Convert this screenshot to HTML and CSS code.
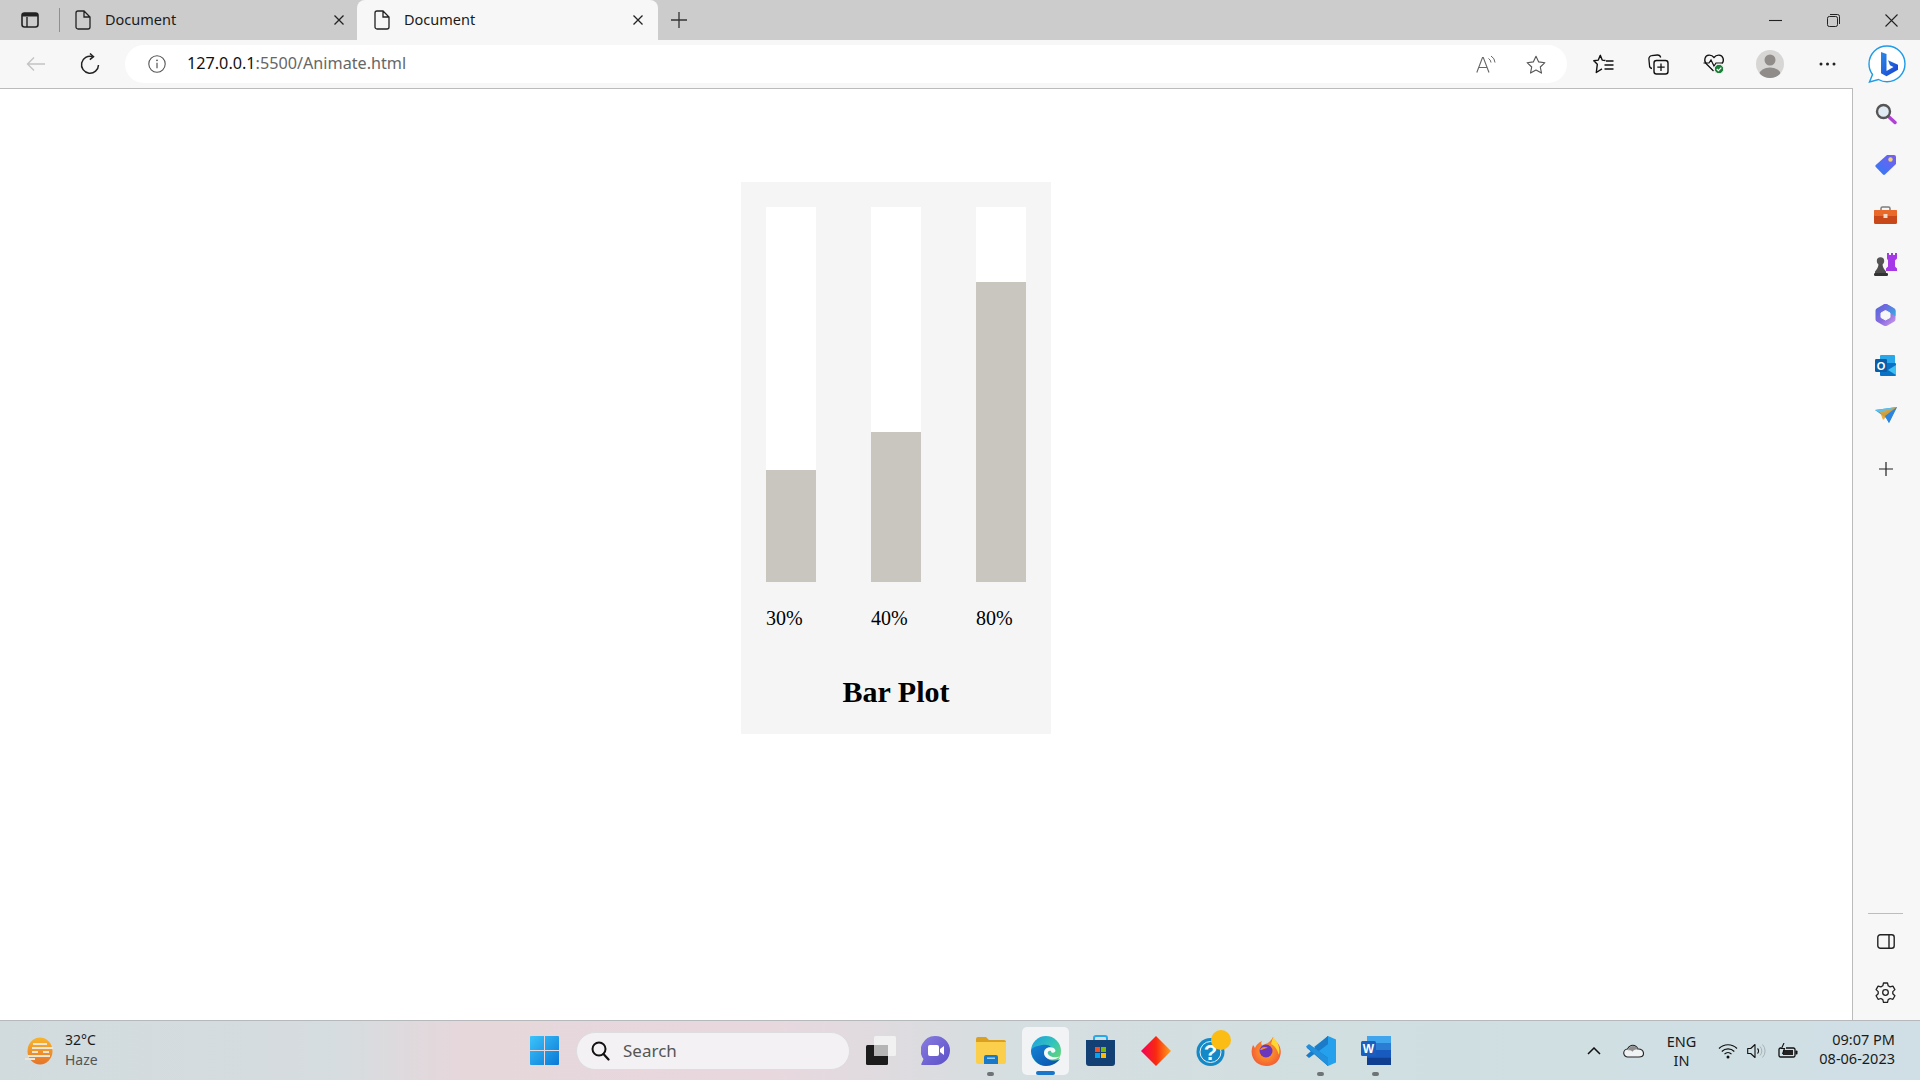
FILE: index.html
```html
<!DOCTYPE html>
<html lang="en">
<head>
    <meta charset="UTF-8">
    <meta name="viewport" content="width=device-width, initial-scale=1.0">
    <title>Document</title>
    <link rel="stylesheet" href="styles.css">
</head>
<body>
    <div class="tabstrip">
        <svg class="tabs-btn" width="18" height="16" viewBox="0 0 18 16"><rect x="1" y="1" width="16" height="14" rx="2.500" fill="none" stroke="#222" stroke-width="1.600"/><path d="M1 4.500V3a2 2 0 0 1 2-2h12a2 2 0 0 1 2 2v1.500z" fill="#222"/><path d="M6 5v10" stroke="#222" stroke-width="1.400"/></svg>
        <span class="tab-sep"></span>
        <div class="tab">
            <svg width="16" height="20" viewBox="0 0 16 20"><path d="M3 1h6l6 6v10a2 2 0 0 1-2 2H3a2 2 0 0 1-2-2V3a2 2 0 0 1 2-2zM9 1v6h6" fill="none" stroke="#222" stroke-width="1.300"/></svg>
            <span class="tab-title">Document</span>
            <svg class="tab-close" width="12" height="12" viewBox="0 0 12 12"><path d="M1.500 1.500l9 9M10.500 1.500l-9 9" stroke="#222" stroke-width="1.300"/></svg>
        </div>
        <div class="tab tab-active">
            <svg width="16" height="20" viewBox="0 0 16 20"><path d="M3 1h6l6 6v10a2 2 0 0 1-2 2H3a2 2 0 0 1-2-2V3a2 2 0 0 1 2-2zM9 1v6h6" fill="none" stroke="#222" stroke-width="1.300"/></svg>
            <span class="tab-title">Document</span>
            <svg class="tab-close" width="12" height="12" viewBox="0 0 12 12"><path d="M1.500 1.500l9 9M10.500 1.500l-9 9" stroke="#222" stroke-width="1.300"/></svg>
        </div>
        <svg class="tab-new" width="18" height="18" viewBox="0 0 18 18"><path d="M9 1v16M1 9h16" stroke="#333" stroke-width="1.300"/></svg>
        <div class="win-controls">
            <svg width="13" height="13" viewBox="0 0 13 13"><path d="M0 6.500h13" stroke="#222" stroke-width="1.100"/></svg>
            <svg width="13" height="13" viewBox="0 0 13 13"><rect x=".5" y="2.500" width="10" height="10" rx="1.800" fill="none" stroke="#222"/><path d="M3 .5h7.500a2 2 0 0 1 2 2V10" fill="none" stroke="#222"/></svg>
            <svg width="13" height="13" viewBox="0 0 13 13"><path d="M.5.5l12 12M12.500.5l-12 12" stroke="#222" stroke-width="1.100"/></svg>
        </div>
    </div>

    <div class="toolbar">
        <div class="tool-slot back-slot">
            <svg width="20" height="16" viewBox="0 0 20 16"><path d="M19 8H1.500M8 1.500L1.500 8 8 14.500" fill="none" stroke="#c4c4c4" stroke-width="1.400"/></svg>
        </div>
        <div class="tool-slot reload-slot">
            <svg width="20" height="22" viewBox="0 0 20 22"><path d="M12.500 3.600A8.500 8.500 0 1 0 18.500 12" fill="none" stroke="#222" stroke-width="1.500"/><path d="M10 .5l3.500 3.200-3.700 3" fill="none" stroke="#222" stroke-width="1.500"/></svg>
        </div>
        <div class="urlbar">
            <svg width="18" height="18" viewBox="0 0 18 18"><circle cx="9" cy="9" r="8.200" fill="none" stroke="#555" stroke-width="1.100"/><path d="M9 7.800v5.500" stroke="#555" stroke-width="1.200"/><circle cx="9" cy="5.300" r=".9" fill="#555"/></svg>
            <span class="url"><span class="url-host">127.0.0.1</span>:5500/Animate.html</span>
            <svg class="read-icon" width="20" height="18" viewBox="0 0 20 18"><path d="M.8 17.500L6.500 2.500h.8l5.700 15M3 12.500h8" fill="none" stroke="#666" stroke-width="1.100"/><path d="M12.500 3.500a5 5 0 0 1 2.500 4M15 1a8 8 0 0 1 4 6.500" fill="none" stroke="#666" stroke-width="1"/></svg>
            <svg class="star-icon" width="20" height="19" viewBox="0 0 20 19"><path d="M10 1.200l2.700 5.700 6.200.8-4.600 4.300 1.200 6.100-5.500-3-5.500 3 1.200-6.100-4.600-4.300 6.200-.8z" fill="none" stroke="#555" stroke-width="1.100" stroke-linejoin="round"/></svg>
        </div>
        <div class="tool-group">
            <div class="tool-slot">
                <svg width="21" height="20" viewBox="0 0 21 20"><path d="M12.500 6.500l-3.300-.4L7.300 1.300 5.300 6.100 .8 6.800l3.500 3.500-1 8.200 5.700-3.600" fill="none" stroke="#111" stroke-width="1.400" stroke-linejoin="round"/><path d="M13 7h7.500M11.500 11h9M11.500 15h9" stroke="#111" stroke-width="1.300"/></svg>
            </div>
            <div class="tool-slot">
                <svg width="21" height="21" viewBox="0 0 21 21"><path d="M4 14.500A3 3 0 0 1 1.500 11.500l-.6-6.500a3 3 0 0 1 2.700-3.300l5.700-.7c1.700-.1 3 .8 3.400 2.500" fill="none" stroke="#111" stroke-width="1.300"/><rect x="6" y="6.500" width="14" height="13.500" rx="2.500" fill="none" stroke="#111" stroke-width="1.400"/><path d="M13 9.500v7.500M9.300 13.200h7.400" stroke="#111" stroke-width="1.300"/></svg>
            </div>
            <div class="tool-slot">
                <svg width="22" height="20" viewBox="0 0 22 20"><path d="M10.500 17L3.500 10C.5 7 1.500 1.500 6 1.200c2.200-.1 3.800.7 5 2.300 1.200-1.600 2.800-2.400 5-2.300 4.500.3 5.500 5.800 3 8.300" fill="none" stroke="#111" stroke-width="1.300"/><path d="M.5 9H6l2-3 3 6 2-3h6" fill="none" stroke="#111" stroke-width="1.200"/><circle cx="16" cy="15" r="4.700" fill="#1a7f37" stroke="#f7f7f7"/><path d="M13.800 15l1.600 1.600 2.900-2.900" fill="none" stroke="#fff" stroke-width="1.200"/></svg>
            </div>
            <div class="tool-slot profile-slot">
                <svg width="28" height="28" viewBox="0 0 28 28"><defs><clipPath id="profileClip"><circle cx="14" cy="14" r="14"/></clipPath></defs><circle cx="14" cy="14" r="14" fill="#d8d6d4"/><g clip-path="url(#profileClip)" fill="#8f8c8a"><circle cx="14" cy="10" r="5.500"/><ellipse cx="14" cy="24" rx="10.500" ry="6.500"/></g></svg>
            </div>
            <div class="tool-slot dots-slot">
                <svg width="17" height="4" viewBox="0 0 17 4" fill="#222"><circle cx="2" cy="2" r="1.500"/><circle cx="8.500" cy="2" r="1.500"/><circle cx="15" cy="2" r="1.500"/></svg>
            </div>
            <div class="tool-slot bing-slot">
                <svg width="38" height="38" viewBox="0 0 38 38"><defs><linearGradient id="bingGrad" x1="0" y1="0" x2="1" y2="1"><stop offset="0" stop-color="#2a8ae8"/><stop offset="1" stop-color="#1a3fd0"/></linearGradient></defs><path d="M19 1C9 1 1 9 1 19c0 4 1.300 7.500 3.500 10.500L1.500 37l9-2.500c2.600 1.500 5.500 2.300 8.500 2.300 10 0 18-8 18-18S29 1 19 1z" fill="#fff" stroke="#1f9be8" stroke-width="1.400"/><path d="M13 7l5.500 2v17l7-4-3.500-1.700-2-5 10 4.500v5l-11.500 6.500-5.500-3z" fill="url(#bingGrad)"/></svg>
            </div>
        </div>
    </div>

    <div class="main">
        <div class="page">
            <div class="panel">
                <div class="bars">
                    <div class="bar-col">
                        <div class="track"><div class="fill" style="height: 30%"></div></div>
                        <p class="bar-label">30%</p>
                    </div>
                    <div class="bar-col">
                        <div class="track"><div class="fill" style="height: 40%"></div></div>
                        <p class="bar-label">40%</p>
                    </div>
                    <div class="bar-col">
                        <div class="track"><div class="fill" style="height: 80%"></div></div>
                        <p class="bar-label">80%</p>
                    </div>
                </div>
                <h2 class="plot-title">Bar Plot</h2>
            </div>
        </div>

        <div class="sidebar">
            <div class="side-slot">
                <svg width="22" height="22" viewBox="0 0 22 22"><path d="M13 13l7 6.500" stroke="#b23fd6" stroke-width="3.400" stroke-linecap="round"/><circle cx="8.500" cy="8.500" r="6.500" fill="#dfeaf2" stroke="#555" stroke-width="2.400"/></svg>
            </div>
            <div class="side-slot">
                <svg width="21" height="21" viewBox="0 0 21 21"><defs><linearGradient id="tagGrad" x1="0" y1="1" x2="1" y2="0"><stop offset="0" stop-color="#2f7cf6"/><stop offset="1" stop-color="#7a5cf0"/></linearGradient></defs><path d="M12 1h7a2 2 0 0 1 2 2v7L10 20.500a1.500 1.500 0 0 1-2 0L.8 13a1.500 1.500 0 0 1 0-2z" fill="url(#tagGrad)"/><circle cx="15.500" cy="5.500" r="2.200" fill="#f1d36a"/></svg>
            </div>
            <div class="side-slot">
                <svg class="side-toolbox" width="23" height="18" viewBox="0 0 23 18"><path d="M7 5V2.500A1.500 1.500 0 0 1 8.500 1h6A1.500 1.500 0 0 1 16 2.500V5" fill="none" stroke="#7d7d7d" stroke-width="1.500"/><rect y="4" width="23" height="14" rx="1.500" fill="#c9481a"/><rect y="4" width="23" height="6" rx="1" fill="#e8692a"/><rect x="9.500" y="8" width="4" height="4" fill="#f1d9c8"/></svg>
            </div>
            <div class="side-slot">
                <svg width="23" height="23" viewBox="0 0 23 23"><path d="M13 0h2v2h2V0h2v2h2V0h2v5.500l-2 2v6l2 2V18H12v-2.500l2-2v-6l-1-2z" fill="#a638e8"/><circle cx="6.500" cy="8" r="3.700" fill="#555"/><path d="M4.500 11h4c0 3 1.500 5 3.500 7.500V20H1v-1.500C3 16 4.500 14 4.500 11z" fill="#4d4d4d"/><rect y="20" width="14" height="3" rx="1.200" fill="#333"/></svg>
            </div>
            <div class="side-slot">
                <svg width="21" height="22" viewBox="0 0 21 22"><defs><linearGradient id="msGrad" x1="0" y1="0" x2="1" y2="1"><stop offset="0" stop-color="#4a68dc"/><stop offset=".55" stop-color="#8c6be0"/><stop offset="1" stop-color="#cfa0ea"/></linearGradient><linearGradient id="msTeal" x1="0" y1="0" x2="1" y2="1"><stop offset="0" stop-color="#7a5ce0"/><stop offset="1" stop-color="#2fb0e0"/></linearGradient></defs><path d="M8.500 .5a4 4 0 0 1 4 0l6.500 3.800a3 3 0 0 1 1.500 2.700v8a3 3 0 0 1-1.500 2.700l-6.500 3.800a4 4 0 0 1-4 0L2 17.700A3 3 0 0 1 .5 15V7A3 3 0 0 1 2 4.300z" fill="url(#msGrad)"/><path d="M8.500 .5a4 4 0 0 1 4 0l6.500 3.800a3 3 0 0 1 1.500 2.700v5l-6-3.500-3-3z" fill="url(#msTeal)"/><path d="M10.500 6.500l4.500 2.500v4.500L10.500 16 6 13.500V9z" fill="#f7f7f7" stroke="#f7f7f7" stroke-linejoin="round"/></svg>
            </div>
            <div class="side-slot">
                <svg width="21" height="21" viewBox="0 0 21 21"><rect x="5" y="0" width="15" height="10" rx="1" fill="#28a8ea"/><rect x="5" y="8" width="16" height="13" rx="1" fill="#0a72c6"/><path d="M21 10v10l-8-5z" fill="#3dc0f2"/><rect y="4" width="12" height="13" rx="1.200" fill="#0a5ea8"/><text x="6" y="14.500" class="outlook-o">O</text></svg>
            </div>
            <div class="side-slot">
                <svg width="22" height="16" viewBox="0 0 22 16"><path d="M0 3l22-3-8 16-3-5z" fill="#2f9ae8"/><path d="M0 3l22-3L8 7z" fill="#5bc0f0"/><path d="M5 5l17-5L8 13z" fill="#e8a021" opacity=".85"/><path d="M14 16L22 0 10 9z" fill="#2a84e0"/></svg>
            </div>
            <div class="side-slot side-plus">
                <svg width="16" height="16" viewBox="0 0 16 16"><path d="M8 1v14M1 8h14" stroke="#222" stroke-width="1.200"/></svg>
            </div>
            <div class="side-bottom">
                <span class="side-divider"></span>
                <svg class="side-panel" width="18" height="15" viewBox="0 0 18 15"><rect x=".8" y=".8" width="16.400" height="13.400" rx="2.500" fill="none" stroke="#222" stroke-width="1.400"/><path d="M12 1v13" stroke="#222" stroke-width="1.400"/></svg>
                <svg class="side-gear" width="21" height="21" viewBox="0 0 21 21"><path d="M8.500 1h4l.7 2.800 1.900 1.100 2.800-.8 2 3.500-2.100 2 0 2.200 2.100 2-2 3.500-2.800-.8-1.900 1.100-.7 2.800h-4l-.7-2.800-1.900-1.100-2.800.8-2-3.500 2.100-2 0-2.200-2.100-2 2-3.500 2.800.8 1.900-1.100z" fill="none" stroke="#222" stroke-width="1.300" stroke-linejoin="round"/><circle cx="10.500" cy="10.500" r="2.800" fill="none" stroke="#222" stroke-width="1.300"/></svg>
            </div>
        </div>
    </div>

    <div class="taskbar">
        <div class="weather">
            <svg width="30" height="28" viewBox="0 0 30 28"><defs><linearGradient id="sunGrad" x1="0" y1="0" x2="0" y2="1"><stop offset="0" stop-color="#f8b52c"/><stop offset="1" stop-color="#e5742a"/></linearGradient></defs><ellipse cx="15" cy="14" rx="12.500" ry="13.500" fill="url(#sunGrad)"/><path d="M8 7h14M7 11h21M18 15h6M7 15h6M3 19h22M0 22h10" stroke="#efe7d6" stroke-width="1.800"/></svg>
            <div class="weather-text">
                <span>32°C</span>
                <span class="weather-sub">Haze</span>
            </div>
        </div>
        <div class="start">
            <svg width="29" height="29" viewBox="0 0 29 29"><defs><linearGradient id="winGrad" x1="0" y1="0" x2="1" y2="1"><stop offset="0" stop-color="#3cc4fa"/><stop offset="1" stop-color="#0a78d6"/></linearGradient></defs><path d="M0 1a1 1 0 0 1 1-1h13v14H0zM15 0h13a1 1 0 0 1 1 1v13H15zM0 15h14v14H1a1 1 0 0 1-1-1zM15 15h14v13a1 1 0 0 1-1 1H15z" fill="url(#winGrad)"/></svg>
        </div>
        <div class="searchbox">
            <svg width="19" height="20" viewBox="0 0 19 20"><circle cx="8" cy="8" r="6.500" fill="none" stroke="#111" stroke-width="2"/><path d="M12.500 13l5 5.500" stroke="#111" stroke-width="2.200" stroke-linecap="round"/></svg>
            <span>Search</span>
        </div>
        <div class="apps">
            <div class="app">
                <svg width="30" height="29" viewBox="0 0 30 29"><rect y="9" width="22" height="20" rx="1.500" fill="#1c1c1c"/><rect x="8" y="0" width="22" height="20" rx="1.500" fill="#f4f4f4" fill-opacity=".85"/><rect x="8" y="9" width="14" height="11" fill="#b5b5b5"/></svg>
            </div>
            <div class="app">
                <svg width="29" height="29" viewBox="0 0 29 29"><defs><linearGradient id="chatGrad" x1="0" y1="0" x2="1" y2="1"><stop offset="0" stop-color="#8a7ce0"/><stop offset="1" stop-color="#5a4fc8"/></linearGradient></defs><path d="M14.500 0a14.500 14.500 0 0 1 0 29H1c-1 0-1-.8-.5-1.500L2.500 23A14.500 14.500 0 0 1 14.500 0z" fill="url(#chatGrad)"/><rect x="7" y="9" width="11" height="11" rx="2" fill="#fff"/><path d="M19 13l4-3v9l-4-3z" fill="#fff"/></svg>
            </div>
            <div class="app">
                <svg width="30" height="27" viewBox="0 0 30 27"><path d="M0 2a2 2 0 0 1 2-2h8l3 3h15a2 2 0 0 1 2 2v4H0z" fill="#d9a021"/><path d="M0 5h30v20a2 2 0 0 1-2 2H2a2 2 0 0 1-2-2z" fill="#fbcf4c"/><path d="M8 20a2 2 0 0 1 2-2h10a2 2 0 0 1 2 2v7H8z" fill="#1a78c8"/><rect x="11" y="20.500" width="8" height="1.500" fill="#8fd0f5"/></svg>
                <span class="app-dot"></span>
            </div>
            <div class="app app-active">
                <svg width="30" height="30" viewBox="0 0 30 30"><defs><linearGradient id="edgeGrad" x1="0" y1="0" x2="1" y2="1"><stop offset="0" stop-color="#1b9de2"/><stop offset=".5" stop-color="#33c6b8"/><stop offset="1" stop-color="#7ed957"/></linearGradient><linearGradient id="edgeBlue" x1="0" y1="0" x2="1" y2="1"><stop offset="0" stop-color="#1485d8"/><stop offset="1" stop-color="#0a4fa8"/></linearGradient></defs><circle cx="15" cy="15" r="15" fill="url(#edgeGrad)"/><path d="M0 15C1 24 8 30 15 30c6 0 11-3 14-7-4 2-9 2-12 0-3-2-4-5-3-8 1-3 4-4 7-3-2-3-6-4-10-3C5 10 0 12 0 15z" fill="url(#edgeBlue)"/><path d="M13 17c0-3.500 3-6.500 8-5.500 3 .6 5 3.500 2 5-2 .8-3-.2-3-1.500-2-1-4 1-3 3 1.500 3 6 4 12 2.500-4 3.500-9 3.500-12.500 2C14 21 13 19 13 17z" fill="#f5f7f8"/></svg>
                <span class="app-indicator"></span>
            </div>
            <div class="app">
                <svg width="29" height="31" viewBox="0 0 29 31"><path d="M8 5V3a2 2 0 0 1 2-2h9a2 2 0 0 1 2 2v2" fill="none" stroke="#28a8ea" stroke-width="2"/><path d="M0 5h29v23a3 3 0 0 1-3 3H3a3 3 0 0 1-3-3z" fill="#123f74"/><rect x="9" y="12" width="5" height="5" fill="#f25022"/><rect x="15" y="12" width="5" height="5" fill="#7fba00"/><rect x="9" y="18" width="5" height="5" fill="#00a4ef"/><rect x="15" y="18" width="5" height="5" fill="#ffb900"/></svg>
            </div>
            <div class="app">
                <svg width="30" height="30" viewBox="0 0 30 30"><defs><linearGradient id="diaGrad" x1="0" y1="0" x2="1" y2="0"><stop offset="0" stop-color="#f4005a"/><stop offset=".5" stop-color="#f92a10"/><stop offset="1" stop-color="#ffa21a"/></linearGradient></defs><path d="M15 0l15 15-15 15L0 15z" fill="url(#diaGrad)"/></svg>
            </div>
            <div class="app">
                <svg width="36" height="36" viewBox="0 0 36 36" class="help-icon"><circle cx="14.500" cy="22" r="14" fill="#1489c8"/><circle cx="14.500" cy="22" r="10.500" fill="none" stroke="#e6f2f5" stroke-width="1"/><text x="14.500" y="30" class="help-q">?</text><circle cx="25" cy="10" r="10" fill="#fbbd14"/></svg>
            </div>
            <div class="app">
                <svg width="30" height="30" viewBox="0 0 30 30"><defs><radialGradient id="foxGrad" cx=".5" cy=".5" r=".6"><stop offset="0" stop-color="#ffb020"/><stop offset="1" stop-color="#f2503a"/></radialGradient></defs><path d="M22 1c1 3 4 5 6 8 3 6 2 12-2 17-5 5-14 5-20 1C1 23-1 16 2 9c1 1 2 3 2 3 1-3 3-5 7-7-1 2-1 3 0 4 4-1 8-2 11-8z" fill="url(#foxGrad)"/><path d="M22 1c3 3 8 9 6 18-2-6-4-9-8-11z" fill="#fdd835"/><circle cx="15" cy="15" r="6.500" fill="#6b37bc"/><path d="M9 14c3 0 5-2 8-2-3-2-7-1-8 2z" fill="#f98a2a"/></svg>
            </div>
            <div class="app">
                <svg width="30" height="30" viewBox="0 0 30 30"><path d="M22 0l8 3.500v23L22 30 8 16z" fill="#24a0ed"/><path d="M22 0v8L13 15l-5-4z" fill="#1a85d0"/><path d="M22 30v-8L4 9 .5 11.500 1 12z" fill="#0e6eb8"/><path d="M0 19.500L3 22l19-14V0z" fill="#1a7cc8"/><path d="M0 10.500L3 8l19 14v8z" fill="#2290dc"/></svg>
                <span class="app-dot"></span>
            </div>
            <div class="app">
                <svg width="30" height="29" viewBox="0 0 30 29"><rect x="6" y="0" width="24" height="29" rx="1.500" fill="#2b7cd3"/><rect x="6" y="0" width="24" height="7" fill="#41a5ee"/><rect x="6" y="14" width="24" height="7.500" fill="#185abd"/><rect x="6" y="21.500" width="24" height="7.500" fill="#103f91"/><rect x="0" y="5" width="15" height="15" rx="1.500" fill="#1a5fc0"/><text x="7.500" y="17" class="word-w">W</text></svg>
                <span class="app-dot"></span>
            </div>
        </div>
        <div class="tray">
            <div class="tray-item tray-chevron">
                <svg width="14" height="8" viewBox="0 0 14 8"><path d="M1 7l6-6 6 6" fill="none" stroke="#111" stroke-width="1.500"/></svg>
            </div>
            <div class="tray-item tray-cloud">
                <svg width="21" height="14" viewBox="0 0 21 14"><path d="M5 13a4 4 0 0 1-.5-8C6 1.500 10 0 13 2.500c1 .8 1.500 1.500 1.800 2.500 3.500-.3 5.700 2 5.700 4.500S18.500 13 16 13z" fill="#f0f3f4" stroke="#222" stroke-width="1.100"/><path d="M5 6.500C6 2 10 1 13 2.800c1 .8 1.500 1.500 1.800 2.500-3 .2-4.500 1-5.300 2.500-1.500-1.500-3-1.800-4.500-1.300z" fill="#8d8d8d"/></svg>
            </div>
            <div class="tray-item tray-lang">
                <span>ENG</span>
                <span>IN</span>
            </div>
            <div class="tray-item tray-wifi">
                <svg width="20" height="16" viewBox="0 0 20 16"><path d="M1 5.500c5-5 13-5 18 0M3.800 8.500c3.500-3.500 9-3.500 12.500 0M6.500 11.200c2-2 5-2 7 0" fill="none" stroke="#111" stroke-width="1.200"/><circle cx="10" cy="14" r="1.500" fill="#111"/></svg>
            </div>
            <div class="tray-item tray-sound">
                <svg width="20" height="16" viewBox="0 0 20 16"><path d="M.7 5.500h3L8 1.500v13l-4.300-4h-3z" fill="none" stroke="#111" stroke-width="1.100" stroke-linejoin="round"/><path d="M10.500 5.500a3.500 3.500 0 0 1 0 5" fill="none" stroke="#111" stroke-width="1.100"/><path d="M13 3.500a6.500 6.500 0 0 1 0 9M15.500 1.500a9.500 9.500 0 0 1 0 13" fill="none" stroke="#a9b2b5" stroke-width="1"/></svg>
            </div>
            <div class="tray-item tray-battery">
                <svg width="20" height="16" viewBox="0 0 20 16"><path d="M3 5H2.500A1.500 1.500 0 0 0 1 6.500v6A1.500 1.500 0 0 0 2.500 14h13a1.500 1.500 0 0 0 1.500-1.500v-6A1.500 1.500 0 0 0 15.500 5H8" fill="none" stroke="#111" stroke-width="1.300"/><rect x="5" y="7" width="10" height="5" fill="#222"/><rect x="17.500" y="7.500" width="2" height="4" rx=".8" fill="#111"/><path d="M6 0L3.500 5.500h3L4.500 11" fill="none" stroke="#111" stroke-width="1.100"/></svg>
            </div>
            <div class="tray-item clock">
                <span>09:07 PM</span>
                <span>08-06-2023</span>
            </div>
        </div>
    </div>
</body>
</html>
```

FILE: styles.css
```css
* {
    box-sizing: border-box;
}
body {
    display: flex;
    flex-direction: column;
    width: 1920px;
    height: 1080px;
    margin: 0;
    overflow: hidden;
    background-color: #FFFFFF;
    font-family: "Noto Sans", "Open Sans", sans-serif;
    color: #1A1A1A;
}

/* barra de pestanas */
.tabstrip {
    display: flex;
    align-items: center;
    height: 40px;
    padding-left: 21px;
    background-color: #CCCCCC;
}
.tabs-btn {
    margin-right: 20px;
}
.tab-sep {
    width: 1px;
    height: 24px;
    background-color: #8F8F8F;
}
.tab {
    display: flex;
    align-items: center;
    gap: 14px;
    width: 297px;
    height: 40px;
    padding: 0 12px 0 15px;
    font-size: 14.5px;
}
.tab-title {
    margin-bottom: 2px;
}
.tab-active {
    width: 301px;
    padding: 0 14px 0 17px;
    background-color: #F7F7F7;
    border-radius: 8px 8px 0 0;
}
.tab-close {
    margin-left: auto;
}
.tab-new {
    margin-left: 12px;
}
.win-controls {
    display: flex;
    gap: 45px;
    margin-left: auto;
    padding-right: 22px;
}

/* barra de direccion */
.toolbar {
    display: flex;
    align-items: center;
    height: 48px;
    padding-left: 8px;
    background-color: #F7F7F7;
}
.tool-slot {
    display: flex;
    justify-content: center;
    align-items: center;
    width: 55px;
    height: 48px;
}
.reload-slot {
    width: 54px;
}
.urlbar {
    display: flex;
    align-items: center;
    width: 1442px;
    height: 38px;
    margin-left: 8px;
    padding: 0 21px 0 23px;
    background-color: #FFFFFF;
    border-radius: 19px;
}
.url {
    margin: 0 0 2px 21px;
    font-size: 16.2px;
    color: #666666;
}
.url-host {
    color: #111111;
}
.read-icon {
    margin-left: auto;
}
.star-icon {
    margin-left: 30px;
}
.tool-group {
    display: flex;
    margin-left: 9px;
}
.profile-slot {
    width: 58px;
}
.dots-slot {
    width: 57px;
}
.bing-slot {
    width: 62px;
}

/* contenido */
.main {
    display: flex;
    flex: 1;
    min-height: 0;
}
.page {
    flex: 1;
    padding: 93px 0 0 741px;
    border-top: 1px solid #BBBBBB;
    border-right: 1px solid #BBBBBB;
}
.panel {
    width: 310px;
    height: 552px;
    padding: 25px;
    background-color: #F5F5F5;
}
.bars {
    display: flex;
    gap: 55px;
}
.bar-col {
    width: 50px;
}
.track {
    display: flex;
    flex-direction: column;
    justify-content: flex-end;
    height: 375px;
    background-color: #FFFFFF;
}
.fill {
    background-color: #C9C6BF;
}
.bar-label {
    margin: 25px 0 0 0;
    font-family: "Liberation Serif", serif;
    font-size: 20px;
    line-height: 23px;
    color: #000000;
}
.plot-title {
    margin: 45px 0 0 0;
    font-family: "Liberation Serif", serif;
    font-size: 30px;
    line-height: 34px;
    font-weight: bold;
    text-align: center;
    color: #000000;
}

/* panel lateral */
.sidebar {
    display: flex;
    flex-direction: column;
    align-items: center;
    width: 67px;
    padding: 1px 2px 0 0;
    background-color: #F7F7F7;
}
.side-slot {
    display: flex;
    justify-content: center;
    align-items: center;
    width: 100%;
    height: 50.2px;
    flex-shrink: 0;
}
.side-toolbox {
    margin-top: 2px;
}
.outlook-o {
    font-family: "Liberation Sans", sans-serif;
    font-size: 11px;
    font-weight: bold;
    fill: #FFFFFF;
    text-anchor: middle;
}
.side-plus {
    margin-top: 4px;
}
.side-bottom {
    display: flex;
    flex-direction: column;
    align-items: center;
    margin-top: auto;
    padding-bottom: 17px;
}
.side-divider {
    width: 35px;
    height: 1px;
    background-color: #BDBDBD;
}
.side-panel {
    margin-top: 20px;
}
.side-gear {
    margin-top: 33px;
}

/* barra de tareas */
.taskbar {
    display: flex;
    align-items: center;
    height: 60px;
    border-top: 1px solid #B5B9BB;
    background: linear-gradient(90deg, #D1DBDE 0%, #D6DCDF 18%, #E6D7DB 24%, #E8D8DE 40%, #D6DEE0 52%, #CFDFE1 75%, #D0DFE6 100%);
}
.weather {
    display: flex;
    align-items: center;
    gap: 10px;
    width: 530px;
    padding-left: 25px;
}
.weather-text {
    display: flex;
    flex-direction: column;
    margin-top: -2px;
    font-size: 14px;
    line-height: 20px;
}
.weather-sub {
    color: #555555;
}
.start {
    display: flex;
    width: 46px;
}
.searchbox {
    display: flex;
    align-items: center;
    gap: 13px;
    width: 274px;
    height: 38px;
    padding-left: 14px;
    background-color: #F3F1F3;
    border: 1px solid #DDDDDF;
    border-radius: 19px;
    font-size: 17px;
    color: #555555;
}
.apps {
    display: flex;
    margin-left: 3px;
}
.app {
    position: relative;
    display: flex;
    justify-content: center;
    align-items: center;
    width: 55px;
    height: 48px;
}
.app-active::before {
    content: "";
    position: absolute;
    left: 4px;
    top: 0;
    width: 47px;
    height: 48px;
    background-color: #F1F3F5;
    border-radius: 5px;
}
.app-active svg {
    position: relative;
}
.app-dot {
    position: absolute;
    left: 24px;
    bottom: -1px;
    width: 7px;
    height: 4px;
    background-color: #6E7375;
    border-radius: 2px;
}
.app-indicator {
    position: absolute;
    left: 18px;
    bottom: 0;
    width: 19px;
    height: 4px;
    background-color: #1976C8;
    border-radius: 2px;
}
.help-icon {
    margin: -6px 0 0 7px;
}
.help-q {
    font-family: "Liberation Sans", sans-serif;
    font-size: 22px;
    font-weight: bold;
    fill: #FFFFFF;
    text-anchor: middle;
}
.word-w {
    font-family: "Liberation Sans", sans-serif;
    font-size: 12px;
    font-weight: bold;
    fill: #FFFFFF;
    text-anchor: middle;
}
.tray {
    display: flex;
    align-items: center;
    margin-left: auto;
    padding-right: 25px;
}
.tray-item {
    display: flex;
    justify-content: center;
    align-items: center;
}
.tray-chevron {
    width: 37px;
}
.tray-cloud {
    width: 42px;
}
.tray-lang {
    flex-direction: column;
    width: 55px;
    font-size: 14.5px;
    line-height: 19px;
}
.tray-wifi {
    width: 38px;
}
.tray-sound {
    width: 20px;
}
.tray-battery {
    width: 42px;
}
.clock {
    flex-direction: column;
    align-items: flex-end;
    width: 86px;
    margin-top: -3px;
    font-size: 14.5px;
    line-height: 19px;
}
```
